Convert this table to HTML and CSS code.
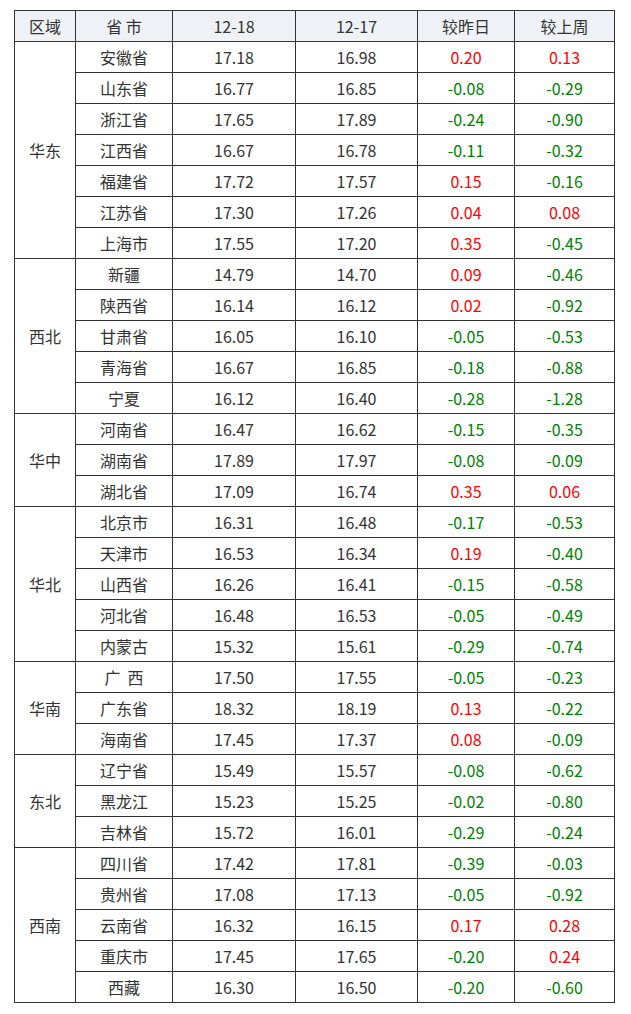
FILE: index.html
```html
<!DOCTYPE html>
<html lang="zh">
<head>
<meta charset="utf-8">
<link rel="stylesheet" href="styles.css">
</head>
<body>
<table class="price-table">
<colgroup>
<col class="c-region"><col class="c-prov"><col class="c-d1"><col class="c-d2"><col class="c-chg"><col class="c-wk">
</colgroup>
<thead>
<tr><th>区域</th><th>省&nbsp;市</th><th>12-18</th><th>12-17</th><th>较昨日</th><th>较上周</th></tr>
</thead>
<tbody>
<tr><td rowspan="7">华东</td><td>安徽省</td><td>17.18</td><td>16.98</td><td class="up">0.20</td><td class="up">0.13</td></tr>
<tr><td>山东省</td><td>16.77</td><td>16.85</td><td class="down">-0.08</td><td class="down">-0.29</td></tr>
<tr><td>浙江省</td><td>17.65</td><td>17.89</td><td class="down">-0.24</td><td class="down">-0.90</td></tr>
<tr><td>江西省</td><td>16.67</td><td>16.78</td><td class="down">-0.11</td><td class="down">-0.32</td></tr>
<tr><td>福建省</td><td>17.72</td><td>17.57</td><td class="up">0.15</td><td class="down">-0.16</td></tr>
<tr><td>江苏省</td><td>17.30</td><td>17.26</td><td class="up">0.04</td><td class="up">0.08</td></tr>
<tr><td>上海市</td><td>17.55</td><td>17.20</td><td class="up">0.35</td><td class="down">-0.45</td></tr>
<tr><td rowspan="5">西北</td><td>新疆</td><td>14.79</td><td>14.70</td><td class="up">0.09</td><td class="down">-0.46</td></tr>
<tr><td>陕西省</td><td>16.14</td><td>16.12</td><td class="up">0.02</td><td class="down">-0.92</td></tr>
<tr><td>甘肃省</td><td>16.05</td><td>16.10</td><td class="down">-0.05</td><td class="down">-0.53</td></tr>
<tr><td>青海省</td><td>16.67</td><td>16.85</td><td class="down">-0.18</td><td class="down">-0.88</td></tr>
<tr><td>宁夏</td><td>16.12</td><td>16.40</td><td class="down">-0.28</td><td class="down">-1.28</td></tr>
<tr><td rowspan="3">华中</td><td>河南省</td><td>16.47</td><td>16.62</td><td class="down">-0.15</td><td class="down">-0.35</td></tr>
<tr><td>湖南省</td><td>17.89</td><td>17.97</td><td class="down">-0.08</td><td class="down">-0.09</td></tr>
<tr><td>湖北省</td><td>17.09</td><td>16.74</td><td class="up">0.35</td><td class="up">0.06</td></tr>
<tr><td rowspan="5">华北</td><td>北京市</td><td>16.31</td><td>16.48</td><td class="down">-0.17</td><td class="down">-0.53</td></tr>
<tr><td>天津市</td><td>16.53</td><td>16.34</td><td class="up">0.19</td><td class="down">-0.40</td></tr>
<tr><td>山西省</td><td>16.26</td><td>16.41</td><td class="down">-0.15</td><td class="down">-0.58</td></tr>
<tr><td>河北省</td><td>16.48</td><td>16.53</td><td class="down">-0.05</td><td class="down">-0.49</td></tr>
<tr><td>内蒙古</td><td>15.32</td><td>15.61</td><td class="down">-0.29</td><td class="down">-0.74</td></tr>
<tr><td rowspan="3">华南</td><td>广&nbsp;&nbsp;西</td><td>17.50</td><td>17.55</td><td class="down">-0.05</td><td class="down">-0.23</td></tr>
<tr><td>广东省</td><td>18.32</td><td>18.19</td><td class="up">0.13</td><td class="down">-0.22</td></tr>
<tr><td>海南省</td><td>17.45</td><td>17.37</td><td class="up">0.08</td><td class="down">-0.09</td></tr>
<tr><td rowspan="3">东北</td><td>辽宁省</td><td>15.49</td><td>15.57</td><td class="down">-0.08</td><td class="down">-0.62</td></tr>
<tr><td>黑龙江</td><td>15.23</td><td>15.25</td><td class="down">-0.02</td><td class="down">-0.80</td></tr>
<tr><td>吉林省</td><td>15.72</td><td>16.01</td><td class="down">-0.29</td><td class="down">-0.24</td></tr>
<tr><td rowspan="5">西南</td><td>四川省</td><td>17.42</td><td>17.81</td><td class="down">-0.39</td><td class="down">-0.03</td></tr>
<tr><td>贵州省</td><td>17.08</td><td>17.13</td><td class="down">-0.05</td><td class="down">-0.92</td></tr>
<tr><td>云南省</td><td>16.32</td><td>16.15</td><td class="up">0.17</td><td class="up">0.28</td></tr>
<tr><td>重庆市</td><td>17.45</td><td>17.65</td><td class="down">-0.20</td><td class="up">0.24</td></tr>
<tr><td>西藏</td><td>16.30</td><td>16.50</td><td class="down">-0.20</td><td class="down">-0.60</td></tr>
</tbody>
</table>
</body>
</html>
```

FILE: styles.css
```css
html, body {
  margin: 0;
  padding: 0;
  background: #ffffff;
}
body {
  padding: 10px 0 0 14px;
  font-family: "Noto Sans CJK SC", "Noto Sans", sans-serif;
  font-size: 16px;
  color: #333333;
}
.price-table {
  border-collapse: collapse;
  table-layout: fixed;
  width: 600px;
}
.c-region { width: 61px; }
.c-prov { width: 97px; }
.c-d1 { width: 123px; }
.c-d2 { width: 122px; }
.c-chg { width: 97px; }
.c-wk { width: 100px; }
.price-table th,
.price-table td {
  border: 1px solid #333333;
  height: 30px;
  padding: 0;
  text-align: center;
  vertical-align: middle;
  line-height: 20px;
  font-weight: normal;
  white-space: nowrap;
}
.price-table th {
  background: #eef2f6;
  color: #333333;
}
.price-table td.up { color: #ff0000; }
.price-table td.down { color: #008000; }
```
